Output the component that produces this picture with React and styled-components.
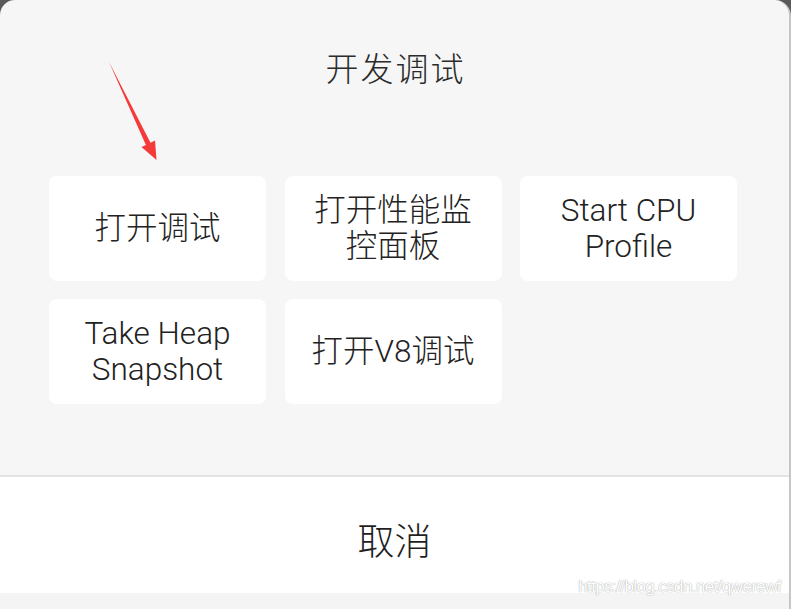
import React from "react";
import styled, { createGlobalStyle } from "styled-components";

const GlobalStyle = createGlobalStyle`
  html, body {
    margin: 0;
    padding: 0;
    background: #5a5a5a;
  }
  body {
    font-family: Roboto, "Noto Sans CJK SC", sans-serif;
  }
  * { box-sizing: border-box; }
`;

const Screen = styled.div`
  position: relative;
  width: 791px;
  height: 609px;
  overflow: hidden;
  background: #5a5a5a;
`;

const Sheet = styled.div`
  display: flex;
  flex-direction: column;
  width: 791px;
  height: 609px;
  background: #f6f6f6;
  border-top-left-radius: 15px;
  border-top-right-radius: 16px;
  border-right: 2px solid #c6c6c6;
  overflow: hidden;
`;

const Panel = styled.div`
  display: flex;
  flex-direction: column;
  height: 475px;
  padding: 0 0 71px 49px;
`;

const Title = styled.div`
  display: flex;
  align-items: center;
  justify-content: center;
  height: 134px;
  margin-left: -49px;
  padding-left: 2px;
  font-family: "Noto Sans CJK SC", sans-serif;
  font-weight: 300;
  font-size: 33px;
  letter-spacing: 2px;
  color: #2b2b2b;
`;

const Grid = styled.div`
  display: grid;
  grid-template-columns: repeat(3, 217px);
  grid-auto-rows: 105px;
  column-gap: 18.5px;
  row-gap: 18px;
  margin-top: 42px;
`;

const Card = styled.div`
  display: flex;
  align-items: center;
  justify-content: center;
  padding: 0 20px;
  background: #ffffff;
  border-radius: 8px;
  text-align: center;
  font-family: Roboto, "Noto Sans CJK SC", sans-serif;
  font-weight: 300;
  font-size: 31.5px;
  line-height: 36px;
  color: #222222;
`;

const Divider = styled.div`
  height: 2px;
  background: #e3e3e3;
`;

const CancelBar = styled.div`
  display: flex;
  align-items: center;
  justify-content: center;
  height: 116px;
  background: #ffffff;
  font-family: "Noto Sans CJK SC", sans-serif;
  font-weight: 300;
  font-size: 37px;
  color: #1f1f1f;
  padding-top: 7px;
`;

const BottomStrip = styled.div`
  flex: 1;
  background: #f4f4f4;
`;

const Arrow = styled.svg`
  position: absolute;
  left: 0;
  top: 0;
  pointer-events: none;
`;

const Watermark = styled.div`
  position: absolute;
  right: 10px;
  top: 577px;
  font-family: "Liberation Sans", Arial, sans-serif;
  font-size: 17px;
  letter-spacing: -0.6px;
  color: #ffffff;
  text-shadow: 0 0 1px rgba(0, 0, 0, 0.35), 0 0 2px rgba(0, 0, 0, 0.15);
`;

const items = [
  "打开调试",
  "打开性能监控面板",
  "Start CPU Profile",
  "Take Heap Snapshot",
  "打开V8调试",
];

export default function App() {
  return (
    <>
      <GlobalStyle />
      <Screen>
        <Sheet>
          <Panel>
            <Title>开发调试</Title>
            <Grid>
              {items.map((t) => (
                <Card key={t}>{t}</Card>
              ))}
            </Grid>
          </Panel>
          <Divider />
          <CancelBar>取消</CancelBar>
          <BottomStrip />
        </Sheet>
        <Arrow width="791" height="609" viewBox="0 0 791 609">
          <polygon
            points="109,62 150.5,142.7 155,140.5 156.5,160 141.5,147 145.9,144.9"
            fill="#f53a3a"
          />
        </Arrow>
        <Watermark>https://blog.csdn.net/qwerewf</Watermark>
      </Screen>
    </>
  );
}
